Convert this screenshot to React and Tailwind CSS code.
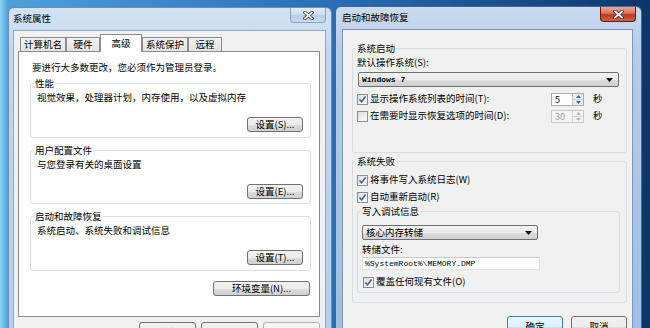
import React from 'react';

const cjk = { fontFamily: '"Noto Sans CJK SC", "Noto Sans", sans-serif' };

function Btn({ children, className = '', disabled = false, isDefault = false }) {
  return (
    <div
      className={`flex items-center justify-center rounded-[3px] border text-[9.5px] leading-none ${
        disabled
          ? 'border-[#adb2b5] bg-[#f4f4f4] text-[#9c9c9c]'
          : isDefault
          ? 'border-[#3c7fb1] bg-[linear-gradient(#eaf6fd_0%,#d9f0fc_50%,#bee6fd_51%,#a7d9f5_100%)] text-black'
          : 'border-[#707070] bg-[linear-gradient(#f2f2f2_0%,#ebebeb_50%,#dddddd_51%,#cfcfcf_100%)] text-black'
      } ${className}`}
    >
      {children}
    </div>
  );
}

function Check({ checked = false }) {
  return (
    <div className="flex h-[11px] w-[11px] shrink-0 items-center justify-center border border-[#8e8f8f] bg-white">
      <div className="flex h-[9px] w-[9px] items-center justify-center bg-[linear-gradient(135deg,#dcdcdc,#fbfbfb)]">
        {checked && (
          <svg width="9" height="9" viewBox="0 0 9 9">
            <path d="M1.5 4.5 L3.6 6.8 L7.6 1.6" fill="none" stroke="#4a5f97" strokeWidth="1.6" />
          </svg>
        )}
      </div>
    </div>
  );
}

function Group({ label, className = '', children }) {
  return (
    <div className={`relative rounded-[3px] border border-[#d5dfe5] ${className}`}>
      <span className="absolute left-[3px] top-[-7px] bg-inherit px-[1px] text-[9.5px] leading-[12px]">{label}</span>
      {children}
    </div>
  );
}

function Select({ children, className = '', mono = false }) {
  return (
    <div
      className={`flex items-center justify-between rounded-[2px] border border-[#707070] bg-[linear-gradient(#f2f2f2_0%,#ebebeb_50%,#dddddd_51%,#cfcfcf_100%)] pl-[3px] pr-[5px] ${className}`}
    >
      <span
        className={mono ? 'text-[8px] font-bold leading-none' : 'text-[9.5px] leading-none'}
        style={mono ? { fontFamily: '"Liberation Mono", monospace' } : undefined}
      >
        {children}
      </span>
      <svg width="7" height="4" viewBox="0 0 7 4">
        <path d="M0 0 H7 L3.5 4 Z" fill="#000" />
      </svg>
    </div>
  );
}

function Spinner({ value, disabled = false }) {
  const arrow = disabled ? '#b5b5b5' : '#4a5f97';
  return (
    <div className={`flex h-[13px] w-[33px] border ${disabled ? 'border-[#c9c9c9]' : 'border-[#abadb3]'}`}>
      <div className={`flex flex-1 items-center pl-[3px] text-[9px] leading-none ${disabled ? 'bg-[#f4f4f4] text-[#a0a0a0]' : 'bg-white text-black'}`}>
        {value}
      </div>
      <div className={`flex w-[11px] flex-col border-l ${disabled ? 'border-[#d4d4d4] bg-[#f4f4f4]' : 'border-[#b8c5d6] bg-[#e8eef6]'}`}>
        <div className="flex flex-1 items-center justify-center border-b border-[#c9d3df]">
          <svg width="5" height="3" viewBox="0 0 5 3"><path d="M0 3 H5 L2.5 0 Z" fill={arrow} /></svg>
        </div>
        <div className="flex flex-1 items-center justify-center">
          <svg width="5" height="3" viewBox="0 0 5 3"><path d="M0 0 H5 L2.5 3 Z" fill={arrow} /></svg>
        </div>
      </div>
    </div>
  );
}

function CloseBtn({ active }) {
  return (
    <div
      className={`absolute right-[5px] top-0 flex h-[15px] w-[36px] items-center justify-center rounded-b-[4px] border border-t-0 ${
        active
          ? 'border-[#5b1e14] bg-[linear-gradient(#e9a99c_0%,#d7705c_45%,#c1391f_55%,#d2633f_100%)]'
          : 'border-[#8ba4c3] bg-[linear-gradient(#e3edf8_0%,#c9dbee_50%,#b7cde6_51%,#c8dbef_100%)]'
      }`}
    >
      <svg width="11" height="9" viewBox="0 0 11 9">
        <path d="M2 1.5 L9 7.5 M9 1.5 L2 7.5" stroke="#3a3a3a" strokeWidth="3.4" strokeLinecap="square" />
        <path d="M2 1.5 L9 7.5 M9 1.5 L2 7.5" stroke="#ffffff" strokeWidth="1.8" strokeLinecap="square" />
      </svg>
    </div>
  );
}

function Tab({ label, w, selected }) {
  return selected ? (
    <div
      className={`relative z-10 -mb-px flex h-[18px] items-start justify-center border border-b-0 border-[#898c95] bg-white pt-[2px] text-[9.5px] leading-[12px] ${w}`}
    >
      {label}
    </div>
  ) : (
    <div
      className={`flex h-[14px] items-center justify-center border border-b-0 border-[#898c95] bg-[linear-gradient(#f2f2f2,#e3e3e3)] text-[9.5px] leading-none ${w}`}
    >
      {label}
    </div>
  );
}

function SystemProperties() {
  const groups = [
    { label: '性能', text: '视觉效果，处理器计划，内存使用，以及虚拟内存', btn: '设置(S)...', h: 'h-[55px]' },
    { label: '用户配置文件', text: '与您登录有关的桌面设置', btn: '设置(E)...', h: 'h-[54px]' },
    { label: '启动和故障恢复', text: '系统启动、系统失败和调试信息', btn: '设置(T)...', h: 'h-[55px]' },
  ];

  return (
    <div className="absolute left-[8px] top-[7px] flex h-[340px] w-[324px] flex-col rounded-t-[6px] border border-[#6b8db8] bg-[linear-gradient(#d3e3f4_0%,#c2d7ee_12%,#b5cde9_100%)]">
      <div className="relative flex h-[22px] items-center pl-[4px] text-[9.5px] leading-none text-black">
        系统属性
        <CloseBtn active={false} />
      </div>
      <div className="ml-[4px] mr-[5px] flex flex-1 flex-col border border-[#93a9c4] bg-[#f0f0f0] px-[4px] pt-[3px]">
        <div className="flex h-[17px] items-end pl-[2px]">
          <Tab label="计算机名" w="w-[46px]" />
          <Tab label="硬件" w="w-[34px]" />
          <Tab label="高级" w="w-[42px]" selected />
          <Tab label="系统保护" w="w-[46px]" />
          <Tab label="远程" w="w-[34px]" />
        </div>
        <div className="flex h-[266px] w-[302px] flex-col border border-[#898c95] bg-white pl-[11px] pr-[8px]">
          <div className="pl-[2px] pt-[9px] text-[9.5px] leading-[12px]">要进行大多数更改，您必须作为管理员登录。</div>
          {groups.map((g, i) => (
            <Group key={g.label} label={g.label} className={`${g.h} bg-white ${i === 0 ? 'mt-[10px]' : 'mt-[12px]'}`}>
              <div className="pl-[6px] pt-[7px] text-[9.5px] leading-[12px]">{g.text}</div>
              <div className="mt-[14px] flex justify-end pr-[7px]">
                <Btn className="h-[15px] w-[56px]">{g.btn}</Btn>
              </div>
            </Group>
          ))}
          <div className="mt-[10px] flex justify-end pr-[1px]">
            <Btn className="h-[15px] w-[97px]">环境变量(N)...</Btn>
          </div>
        </div>
        <div className="mt-[5px] flex justify-end gap-[5px] pr-[1px]">
          <Btn className="h-[22px] w-[57px]">确定</Btn>
          <Btn className="h-[22px] w-[57px]">取消</Btn>
          <Btn className="h-[22px] w-[57px]" disabled>应用(A)</Btn>
        </div>
      </div>
    </div>
  );
}

function StartupRecovery() {
  return (
    <div className="absolute left-[335px] top-[6px] flex h-[340px] w-[307px] flex-col rounded-t-[6px] border border-[#3d6a9e] bg-[linear-gradient(#c9dbee_0%,#b6cde8_12%,#9fbde0_100%)]">
      <div className="relative flex h-[22px] items-center pl-[6px] text-[9.5px] leading-none text-black">
        启动和故障恢复
        <CloseBtn active />
      </div>
      <div className="ml-[6px] mr-[8px] flex flex-1 flex-col border border-[#7d98ba] bg-[#f0f0f0] pl-[9px] pr-[5px] pt-[18px]">
        <Group label="系统启动" className="h-[105px] w-[275px] bg-[#f0f0f0]">
          <div className="pl-[4px] pt-[7px] text-[9.5px] leading-[12px]">默认操作系统(S):</div>
          <Select mono className="ml-[5px] mt-[4px] h-[15px] w-[261px]">Windows 7</Select>
          <div className="mt-[5px] flex h-[14px] items-center pl-[4px]">
            <div className="flex w-[194px] items-center gap-[2px]">
              <Check checked />
              <span className="text-[9.5px] leading-none">显示操作系统列表的时间(T):</span>
            </div>
            <Spinner value="5" />
            <span className="ml-[9px] text-[9.5px] leading-none">秒</span>
          </div>
          <div className="mt-[3px] flex h-[14px] items-center pl-[4px]">
            <div className="flex w-[194px] items-center gap-[2px]">
              <Check />
              <span className="text-[9.5px] leading-none">在需要时显示恢复选项的时间(D):</span>
            </div>
            <Spinner value="30" disabled />
            <span className="ml-[9px] text-[9.5px] leading-none">秒</span>
          </div>
        </Group>
        <Group label="系统失败" className="mt-[8px] h-[142px] w-[275px] bg-[#f0f0f0]">
          <div className="mt-[11px] flex h-[14px] items-center gap-[2px] pl-[4px]">
            <Check checked />
            <span className="text-[9.5px] leading-none">将事件写入系统日志(W)</span>
          </div>
          <div className="mt-[3px] flex h-[14px] items-center gap-[2px] pl-[4px]">
            <Check checked />
            <span className="text-[9.5px] leading-none">自动重新启动(R)</span>
          </div>
          <Group label="写入调试信息" className="ml-[4px] mt-[7px] h-[82px] w-[263px] bg-[#f0f0f0]">
            <Select className="ml-[4px] mt-[13px] h-[15px] w-[176px]">核心内存转储</Select>
            <div className="mt-[3px] pl-[4px] text-[9.5px] leading-[12px]">转储文件:</div>
            <div
              className="ml-[4px] mt-[2px] flex h-[13px] w-[178px] items-center border border-[#dfe3e8] border-t-[#c5cad1] bg-white pl-[2px] text-[8px] leading-none"
              style={{ fontFamily: '"Liberation Mono", monospace' }}
            >
              %SystemRoot%\MEMORY.DMP
            </div>
            <div className="mt-[5px] flex h-[14px] items-center gap-[2px] pl-[5px]">
              <Check checked />
              <span className="text-[9.5px] leading-none">覆盖任何现有文件(O)</span>
            </div>
          </Group>
        </Group>
        <div className="mt-[13px] flex w-[275px] justify-end gap-[8px]">
          <Btn className="h-[22px] w-[56px]" isDefault>确定</Btn>
          <Btn className="h-[22px] w-[56px]">取消</Btn>
        </div>
      </div>
    </div>
  );
}

export default function App() {
  return (
    <div
      className="relative h-[328px] w-[650px] overflow-hidden bg-[linear-gradient(90deg,#8fd3f2_0px,#4ea0da_8px,#2a6fb8_50%,#0d3668_100%)] text-black"
      style={cjk}
    >
      <SystemProperties />
      <StartupRecovery />
    </div>
  );
}
